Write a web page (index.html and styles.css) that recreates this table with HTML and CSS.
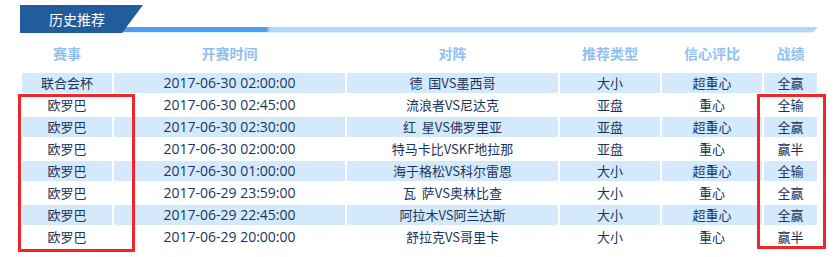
FILE: index.html
```html
<!DOCTYPE html>
<html lang="zh-CN">
<head>
<meta charset="utf-8">
<title>历史推荐</title>
<link rel="stylesheet" href="styles.css">
</head>
<body>
<div class="panel">
  <div class="title-bar">
    <div class="tab">历史推荐</div>
  </div>
  <table class="rec">
    <colgroup>
      <col class="c1"><col class="c2"><col class="c3"><col class="c4"><col class="c5"><col class="c6">
    </colgroup>
    <thead>
      <tr><th>赛事</th><th>开赛时间</th><th>对阵</th><th>推荐类型</th><th>信心评比</th><th>战绩</th></tr>
    </thead>
    <tbody>
      <tr class="alt"><td>联合会杯</td><td class="time">2017-06-30 02:00:00</td><td>德&nbsp;&nbsp;国VS墨西哥</td><td>大小</td><td>超重心</td><td>全赢</td></tr>
      <tr><td>欧罗巴</td><td class="time">2017-06-30 02:45:00</td><td>流浪者VS尼达克</td><td>亚盘</td><td>重心</td><td>全输</td></tr>
      <tr class="alt"><td>欧罗巴</td><td class="time">2017-06-30 02:30:00</td><td>红&nbsp;&nbsp;星VS佛罗里亚</td><td>亚盘</td><td>超重心</td><td>全赢</td></tr>
      <tr><td>欧罗巴</td><td class="time">2017-06-30 02:00:00</td><td>特马卡比VSKF地拉那</td><td>亚盘</td><td>重心</td><td>赢半</td></tr>
      <tr class="alt"><td>欧罗巴</td><td class="time">2017-06-30 01:00:00</td><td>海于格松VS科尔雷恩</td><td>大小</td><td>超重心</td><td>全输</td></tr>
      <tr><td>欧罗巴</td><td class="time">2017-06-29 23:59:00</td><td>瓦&nbsp;&nbsp;萨VS奥林比查</td><td>大小</td><td>重心</td><td>全赢</td></tr>
      <tr class="alt"><td>欧罗巴</td><td class="time">2017-06-29 22:45:00</td><td>阿拉木VS阿兰达斯</td><td>大小</td><td>超重心</td><td>全赢</td></tr>
      <tr><td>欧罗巴</td><td class="time">2017-06-29 20:00:00</td><td>舒拉克VS哥里卡</td><td>大小</td><td>重心</td><td>赢半</td></tr>
    </tbody>
  </table>
  <div class="mark mark-left"></div>
  <div class="mark mark-right"></div>
</div>
</body>
</html>
```

FILE: styles.css
```css
* { box-sizing: border-box; }
html, body { margin: 0; padding: 0; background: #fff; }
body {
  width: 838px;
  height: 257px;
  overflow: hidden;
  font-family: "Noto Sans CJK SC", "Noto Sans", sans-serif;
}
.panel {
  position: relative;
  padding-top: 5px;
}
.title-bar {
  position: relative;
  margin-left: 20px;
  width: 798px;
  height: 28px;
}
.title-bar::before {
  content: "";
  position: absolute;
  left: 0;
  right: 0;
  bottom: 1px;
  height: 5px;
  background: linear-gradient(to right, #4a9ff3 0, #4a9ff3 246px, #aed9fc 250px, #aed9fc 100%);
  clip-path: polygon(0 0, 100% 0, calc(100% - 5px) 100%, 0 100%);
}
.title-bar::after {
  content: "";
  position: absolute;
  left: 102px;
  right: 6px;
  bottom: 0;
  height: 1px;
  background: #dcefff;
}
.tab {
  position: relative;
  z-index: 1;
  width: 123px;
  height: 28px;
  background: #235c9d;
  clip-path: polygon(0 0, 100% 0, 102px 100%, 0 100%);
  color: #fff;
  font-size: 14px;
  line-height: 28px;
  padding-left: 29px;
}
.rec {
  margin-left: 20px;
  border-collapse: separate;
  border-spacing: 2px;
  table-layout: fixed;
  width: 799px;
}
.c1 { width: 90px; }
.c2 { width: 231px; }
.c3 { width: 211px; }
.c4 { width: 100px; }
.c5 { width: 100px; }
.c6 { width: 53px; }
.rec th {
  height: 36px;
  padding: 0;
  font-size: 14px;
  font-weight: bold;
  color: #8fc1f0;
  text-align: center;
  vertical-align: middle;
}
.rec td {
  height: 20px;
  padding: 0;
  font-size: 13px;
  line-height: 20px;
  color: #1a355c;
  text-align: center;
  white-space: nowrap;
}
.rec td.time {
  font-family: "Open Sans", "Noto Sans", sans-serif;
  font-size: 14px;
}
.rec tr.alt td { background: #d5e9fc; }
.mark {
  position: absolute;
  border: 3px solid #f1262a;
}
.mark-left { left: 18px; top: 94px; width: 117px; height: 158px; }
.mark-right { left: 757px; top: 94px; width: 69px; height: 155px; }
```
